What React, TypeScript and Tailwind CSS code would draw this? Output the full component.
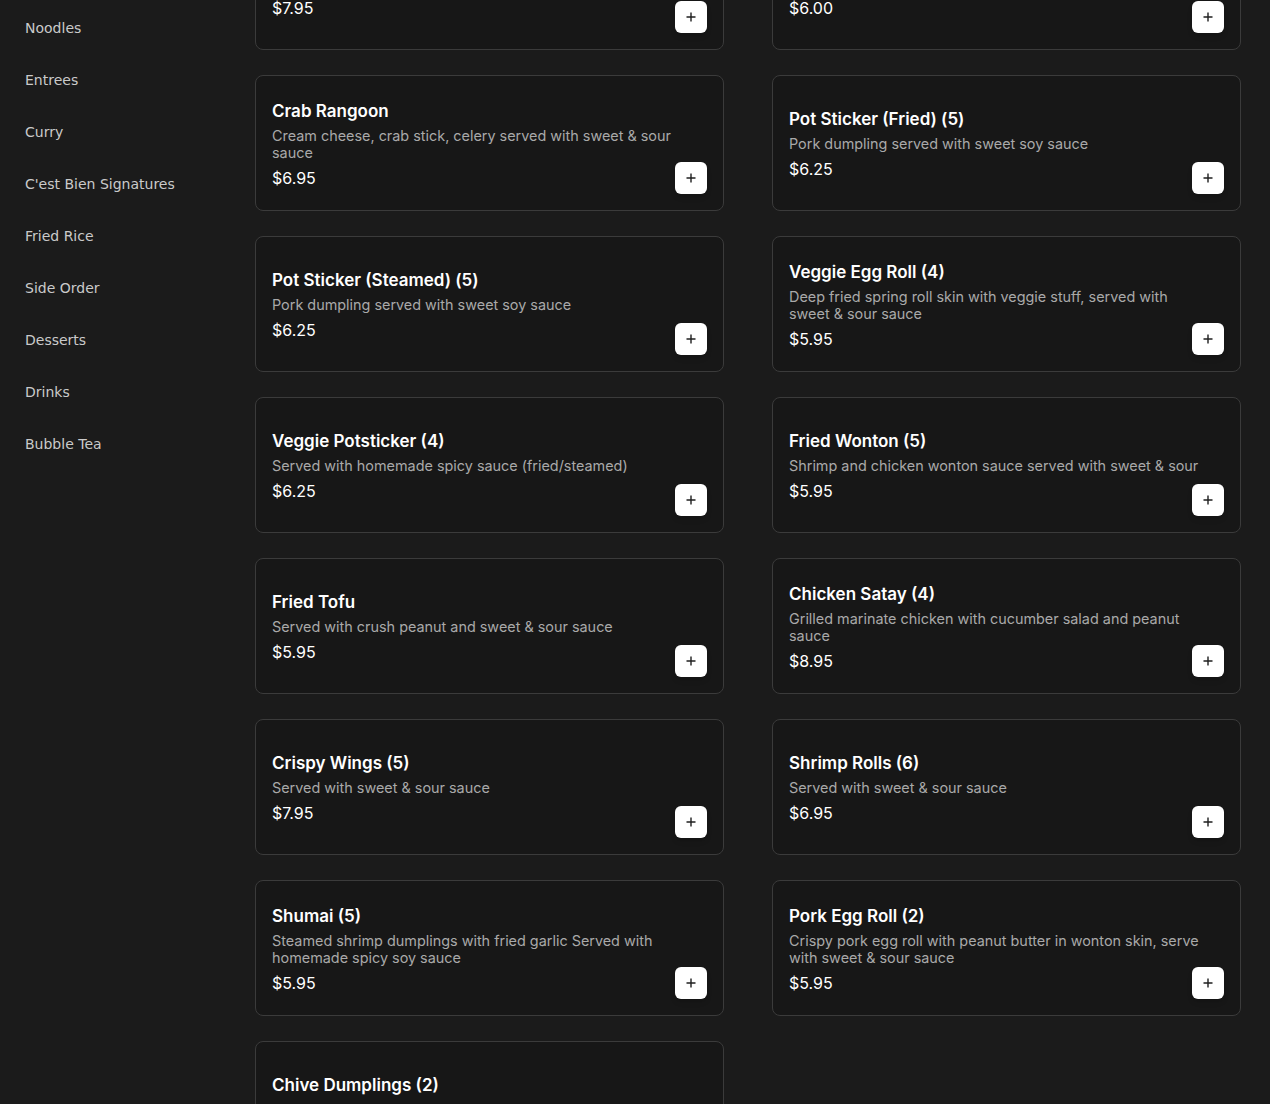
const CATEGORIES = [
  "Noodles",
  "Entrees",
  "Curry",
  "C'est Bien Signatures",
  "Fried Rice",
  "Side Order",
  "Desserts",
  "Drinks",
  "Bubble Tea",
];

const ITEMS = [
  { name: "Spring Rolls (4)", desc: "Served with sweet & sour sauce", price: "$7.95" },
  { name: "Edamame", desc: "Steamed soybeans with sea salt", price: "$6.00" },
  {
    name: "Crab Rangoon",
    desc: "Cream cheese, crab stick, celery served with sweet & sour sauce",
    price: "$6.95",
  },
  { name: "Pot Sticker (Fried) (5)", desc: "Pork dumpling served with sweet soy sauce", price: "$6.25" },
  { name: "Pot Sticker (Steamed) (5)", desc: "Pork dumpling served with sweet soy sauce", price: "$6.25" },
  {
    name: "Veggie Egg Roll (4)",
    desc: "Deep fried spring roll skin with veggie stuff, served with sweet & sour sauce",
    price: "$5.95",
  },
  {
    name: "Veggie Potsticker (4)",
    desc: "Served with homemade spicy sauce (fried/steamed)",
    price: "$6.25",
  },
  {
    name: "Fried Wonton (5)",
    desc: "Shrimp and chicken wonton sauce served with sweet & sour",
    price: "$5.95",
  },
  { name: "Fried Tofu", desc: "Served with crush peanut and sweet & sour sauce", price: "$5.95" },
  {
    name: "Chicken Satay (4)",
    desc: "Grilled marinate chicken with cucumber salad and peanut sauce",
    price: "$8.95",
  },
  { name: "Crispy Wings (5)", desc: "Served with sweet & sour sauce", price: "$7.95" },
  { name: "Shrimp Rolls (6)", desc: "Served with sweet & sour sauce", price: "$6.95" },
  {
    name: "Shumai (5)",
    desc: "Steamed shrimp dumplings with fried garlic Served with homemade spicy soy sauce",
    price: "$5.95",
  },
  {
    name: "Pork Egg Roll (2)",
    desc: "Crispy pork egg roll with peanut butter in wonton skin, serve with sweet & sour sauce",
    price: "$5.95",
  },
  { name: "Chive Dumplings (2)", desc: "Served with sweet soy sauce", price: "$5.95" },
];

function PlusIcon() {
  return (
    <svg width="10" height="10" viewBox="0 0 10 10" fill="none">
      <path d="M5 0.5v9M0.5 5h9" stroke="#1f1f1f" strokeWidth="1.4" />
    </svg>
  );
}

function ItemCard({ name, desc, price }: { name: string; desc: string; price: string }) {
  return (
    <div className="relative h-[136px] rounded-lg border border-[#3b3b3b] bg-[#171717] px-4 flex items-center">
      <div className="w-full pt-[2px] font-['Inter',sans-serif]">
        <div className="text-[17px] leading-6 font-semibold text-white">{name}</div>
        <div className="mt-1 pr-4 text-[14.4px] leading-[17px] text-[#a9a9a9] line-clamp-2">{desc}</div>
        <div className="mt-[5px] text-[16px] leading-6 text-white">{price}</div>
      </div>
      <button className="absolute bottom-4 right-4 w-8 h-8 rounded-md bg-white flex items-center justify-center shadow-md">
        <PlusIcon />
      </button>
    </div>
  );
}

export default function App() {
  return (
    <div className="min-h-screen bg-[#1b1b1b] flex overflow-hidden">
      <aside className="w-[255px] shrink-0 pt-[2px] pl-[25px]">
        {CATEGORIES.map((c) => (
          <div
            key={c}
            className="h-[52px] flex items-center text-[14px] text-[#cacaca] font-['DejaVu_Sans',sans-serif]"
          >
            {c}
          </div>
        ))}
      </aside>
      <main className="flex-1 pr-[29px]">
        <div className="mt-[-86px] grid grid-cols-2 gap-x-12 gap-y-[25px]">
          {ITEMS.map((it) => (
            <ItemCard key={it.name} {...it} />
          ))}
        </div>
      </main>
    </div>
  );
}
